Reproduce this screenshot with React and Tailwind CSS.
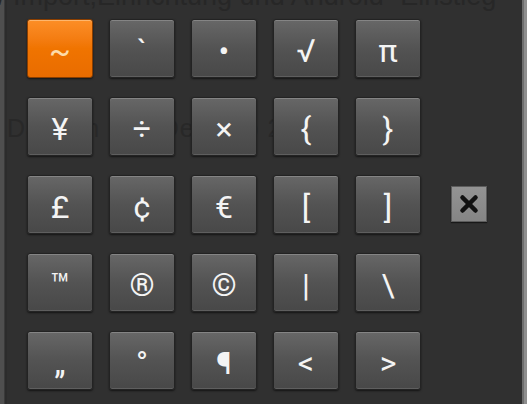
import { X } from 'lucide-react'

const KEYS = [
  ['~', '`', '•', '√', 'π'],
  ['¥', '÷', '×', '{', '}'],
  ['£', '¢', '€', '[', ']'],
  ['™', '®', '©', '|', '\\'],
  ['„', '°', '¶', '<', '>'],
]

function Key({ label, active }) {
  return (
    <div
      className={
        'w-[66px] h-[59px] rounded-[3px] border flex justify-center leading-[62px] text-[32px] ' +
        (active
          ? 'border-[#8a3e00] bg-linear-to-b from-[#fc8e26] via-[#f07400] to-[#e96c00] text-[#fddcaa] shadow-[inset_0_1px_0_rgba(255,200,140,0.7),0_1px_2px_rgba(0,0,0,0.6)]'
          : 'border-[#232323] bg-linear-to-b from-[#676767] via-[#535353] to-[#484848] text-[#f4f4f4] shadow-[inset_0_1px_0_rgba(255,255,255,0.2),inset_0_-1px_0_rgba(255,255,255,0.12),0_1px_2px_rgba(0,0,0,0.6)]')
      }
      style={{ fontFamily: 'Roboto, "DejaVu Sans", sans-serif' }}
    >
      {label}
    </div>
  )
}

export default function App() {
  return (
    <div className="relative w-[527px] h-[404px] overflow-hidden bg-[#303030] flex">
      {/* page text faintly behind the dim overlay */}
      <div
        className="absolute left-[-2px] top-[-24px] text-[27px] text-[#272727] whitespace-nowrap"
        style={{ fontFamily: '"Liberation Sans", Arial, sans-serif' }}
      >
        / Import,Einrichtung und Android- Einstieg
      </div>
      <div
        className="absolute left-[7px] top-[110px] text-[25px] text-[#282828] whitespace-nowrap tracking-[1px]"
        style={{ fontFamily: '"Liberation Sans", Arial, sans-serif' }}
      >
        Dateien und Desktop 2
      </div>

      <div className="w-[5px] h-full bg-[#4f4f4f] border-r border-[#3a3a3a]"></div>
      <div className="w-[2px] h-full bg-[#2c2c2c]"></div>

      <div className="relative flex-1 pl-[20px] pt-[19px]">
        <div className="grid grid-cols-[repeat(5,66px)_36px] gap-x-[16px] gap-y-[19px]">
          {KEYS.map((row, r) => [
            ...row.map((k, c) => <Key key={r + '-' + c} label={k} active={r === 0 && c === 0} />),
            r === 2 ? (
              <div
                key="close"
                className="ml-[14px] self-center mt-[-2px] w-[36px] h-[36px] flex items-center justify-center bg-linear-to-b from-[#939393] to-[#858585] border border-[#5c5c5c] shadow-[0_1px_1px_rgba(0,0,0,0.5)]"
              >
                <X size={26} strokeWidth={4.2} color="#111" />
              </div>
            ) : (
              <div key={'e' + r}></div>
            ),
          ])}
        </div>
      </div>

      <div className="w-[2px] h-full bg-[#6e6e6e]"></div>
      <div className="w-[3px] h-full bg-[#8e8e8e]"></div>
    </div>
  )
}
